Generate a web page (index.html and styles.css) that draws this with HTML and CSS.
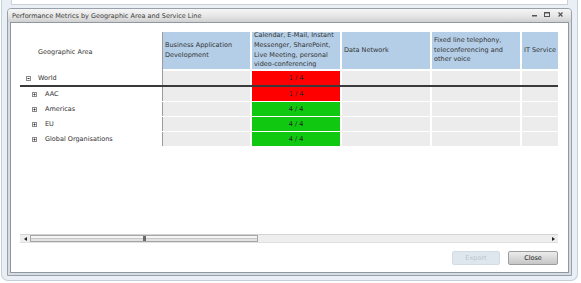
FILE: index.html
```html
<!DOCTYPE html>
<html lang="en">
<head>
    <meta charset="UTF-8">
    <meta name="viewport" content="width=device-width, initial-scale=1.0">
    <title>Performance Metrics by Geographic Area and Service Line</title>
    <link rel="stylesheet" href="styles.css">
</head>
<body>
    <div class="glass">
        <div class="behind"></div>

        <div class="dialog">
            <div class="titlebar">
                <span class="title">Performance Metrics by Geographic Area and Service Line</span>
                <svg class="controls" width="34" height="13" viewBox="0 0 34 13">
                    <rect x="1" y="6" width="5" height="1.5" fill="#555"/>
                    <rect x="13.5" y="3.5" width="5" height="4" fill="none" stroke="#555"/>
                    <rect x="13" y="3" width="6" height="1.5" fill="#555"/>
                    <path d="M27.5 3.5 L31.5 7.5 M31.5 3.5 L27.5 7.5" stroke="#555" stroke-width="1.2"/>
                </svg>
            </div>

            <div class="content">
                <div class="viewport">
                    <div class="row head">
                        <div class="tree"><span class="label">Geographic Area</span></div>
                        <div class="cell first">Business Application Development</div>
                        <div class="cell">Calendar, E-Mail, Instant Messenger, SharePoint, Live Meeting, personal video-conferencing</div>
                        <div class="cell">Data Network</div>
                        <div class="cell">Fixed line telephony, teleconferencing and other voice</div>
                        <div class="cell last">IT Service</div>
                    </div>

                    <div class="row world">
                        <div class="tree">
                            <svg class="exp" width="5" height="5" viewBox="0 0 5 5">
                                <rect x="0.5" y="0.5" width="4" height="4" fill="#fff" stroke="#8a8a8a"/>
                                <path d="M1.5 2.5 H3.5" stroke="#333"/>
                            </svg>
                            <span>World</span>
                        </div>
                        <div class="cell first"></div>
                        <div class="cell bad">1 / 4</div>
                        <div class="cell"></div>
                        <div class="cell"></div>
                        <div class="cell last"></div>
                    </div>

                    <div class="row child">
                        <div class="tree">
                            <svg class="exp" width="5" height="5" viewBox="0 0 5 5">
                                <rect x="0.5" y="0.5" width="4" height="4" fill="#fff" stroke="#8a8a8a"/>
                                <path d="M1.5 2.5 H3.5 M2.5 1.5 V3.5" stroke="#333"/>
                            </svg>
                            <span>AAC</span>
                        </div>
                        <div class="cell first"></div>
                        <div class="cell bad">1 / 4</div>
                        <div class="cell"></div>
                        <div class="cell"></div>
                        <div class="cell last"></div>
                    </div>

                    <div class="row child">
                        <div class="tree">
                            <svg class="exp" width="5" height="5" viewBox="0 0 5 5">
                                <rect x="0.5" y="0.5" width="4" height="4" fill="#fff" stroke="#8a8a8a"/>
                                <path d="M1.5 2.5 H3.5 M2.5 1.5 V3.5" stroke="#333"/>
                            </svg>
                            <span>Americas</span>
                        </div>
                        <div class="cell first"></div>
                        <div class="cell good">4 / 4</div>
                        <div class="cell"></div>
                        <div class="cell"></div>
                        <div class="cell last"></div>
                    </div>

                    <div class="row child">
                        <div class="tree">
                            <svg class="exp" width="5" height="5" viewBox="0 0 5 5">
                                <rect x="0.5" y="0.5" width="4" height="4" fill="#fff" stroke="#8a8a8a"/>
                                <path d="M1.5 2.5 H3.5 M2.5 1.5 V3.5" stroke="#333"/>
                            </svg>
                            <span>EU</span>
                        </div>
                        <div class="cell first"></div>
                        <div class="cell good">4 / 4</div>
                        <div class="cell"></div>
                        <div class="cell"></div>
                        <div class="cell last"></div>
                    </div>

                    <div class="row child">
                        <div class="tree">
                            <svg class="exp" width="5" height="5" viewBox="0 0 5 5">
                                <rect x="0.5" y="0.5" width="4" height="4" fill="#fff" stroke="#8a8a8a"/>
                                <path d="M1.5 2.5 H3.5 M2.5 1.5 V3.5" stroke="#333"/>
                            </svg>
                            <span>Global Organisations</span>
                        </div>
                        <div class="cell first"></div>
                        <div class="cell good">4 / 4</div>
                        <div class="cell"></div>
                        <div class="cell"></div>
                        <div class="cell last"></div>
                    </div>
                </div>

                <div class="hscroll">
                    <div class="arrow">
                        <svg width="3" height="4" viewBox="0 0 3 4"><path d="M3 0 V4 L0 2 Z" fill="#222"/></svg>
                    </div>
                    <div class="thumb"><span class="grip"></span></div>
                    <div class="track"></div>
                    <div class="arrow">
                        <svg width="3" height="4" viewBox="0 0 3 4"><path d="M0 0 V4 L3 2 Z" fill="#222"/></svg>
                    </div>
                </div>

                <div class="actions">
                    <button type="button" class="btn export" disabled>Export</button>
                    <button type="button" class="btn close">Close</button>
                </div>
            </div>
        </div>
    </div>
</body>
</html>
```

FILE: styles.css
```css
* {
    box-sizing: border-box;
}

body {
    margin: 0;
    width: 581px;
    height: 283px;
    overflow: hidden;
    background-color: #fff;
    font-family: "DejaVu Sans", Verdana, sans-serif;
    font-size: 6.5px;
    color: #333;
}

/* outer glass frame of the window */
.glass {
    margin-left: 1px;
    width: 577px;
    height: 281px;
    padding: 0 5px 4px 5px;
    background-color: #e9eff4;
    border: 1px solid #c3cfd9;
    border-top: none;
    border-radius: 0 0 7px 7px;
}

/* edge of the window lying behind the dialog */
.behind {
    height: 5px;
    margin: 0 4px 3px 4px;
    background-color: #fff;
    border: 1px solid #c9d1d9;
    border-top: none;
}

.dialog {
    height: 268px;
    display: flex;
    flex-direction: column;
    padding: 0 2px 2px 2px;
    background-color: #d8dde2;
    border: 1px solid #98a1aa;
    border-radius: 4px 4px 0 0;
}

.titlebar {
    height: 13px;
    margin: 0 -2px;
    padding-left: 4px;
    display: flex;
    align-items: center;
    background: linear-gradient(#f6f6f6, #e4e4e4 60%, #d0d0d0);
    border-radius: 3px 3px 0 0;
    color: #3a3a3a;
}

.controls {
    margin-left: auto;
    margin-right: 6px;
}

.content {
    flex: 1;
    display: flex;
    flex-direction: column;
    padding: 9px 9px 0 9px;
    background-color: #fff;
    border: 1px solid #8f98a1;
}

.viewport {
    height: 202px;
}

.row {
    display: flex;
    width: 538px;
}

.tree {
    width: 143px;
    flex: none;
    display: flex;
    align-items: center;
    border-right: 1px solid #9c9c9c;
}

.cell {
    width: 88px;
    flex: none;
    margin-left: 2px;
    overflow: hidden;
}

.cell.first {
    width: 87px;
    margin-left: 0;
}

.cell.last {
    width: 36px;
}

.head {
    height: 39px;
}

.head .tree {
    align-items: flex-start;
    padding: 16px 0 0 18px;
}

.head .cell {
    height: 37px;
    display: flex;
    align-items: center;
    padding: 0 2px;
    line-height: 9.6px;
    background-color: #b3cee6;
}

.world,
.child {
    height: 15px;
}

.world {
    height: 16px;
    border-bottom: 2px solid #3a3a3a;
}

.world .tree {
    padding-left: 6px;
}

.child .tree {
    height: 14px;
    padding-left: 12px;
}

.exp {
    margin-right: 7px;
    flex: none;
}

.child .exp {
    margin-right: 8px;
}

.world .cell,
.child .cell {
    height: 14px;
    line-height: 14px;
    text-align: center;
    background-color: #ececec;
    color: #222;
}

.cell.bad {
    background-color: #ff0000;
}

.cell.good {
    background-color: #11c811;
}

/* horizontal scroll bar */
.hscroll {
    width: 538px;
    height: 9px;
    display: flex;
    background-color: #eeeeee;
    border-top: 1px solid #d4d4d4;
    border-bottom: 1px solid #e0e0e0;
}

.arrow {
    width: 10px;
    display: flex;
    align-items: center;
    justify-content: center;
}

.thumb {
    width: 228px;
    display: flex;
    align-items: center;
    justify-content: center;
    border: 1px solid #a6a6a6;
    background: linear-gradient(#f6f6f6 0, #f6f6f6 35%, #c8c8c8 35%, #c8c8c8 65%, #e2e2e2 65%);
}

.grip {
    width: 3px;
    height: 5px;
    background-color: #6a6a6a;
}

.track {
    flex: 1;
}

.actions {
    width: 538px;
    margin-top: 8px;
    display: flex;
    justify-content: flex-end;
    gap: 8px;
}

.btn {
    height: 14px;
    padding: 0;
    font-family: inherit;
    font-size: 6.5px;
    border-radius: 2px;
}

.export {
    width: 48px;
    color: #b8c4ce;
    background-color: #dfe7ee;
    border: 1px solid #d2dce5;
}

.close {
    width: 50px;
    color: #222;
    background: linear-gradient(#ececec, #c6c6c6);
    border: 1px solid #9d9d9d;
}
```
